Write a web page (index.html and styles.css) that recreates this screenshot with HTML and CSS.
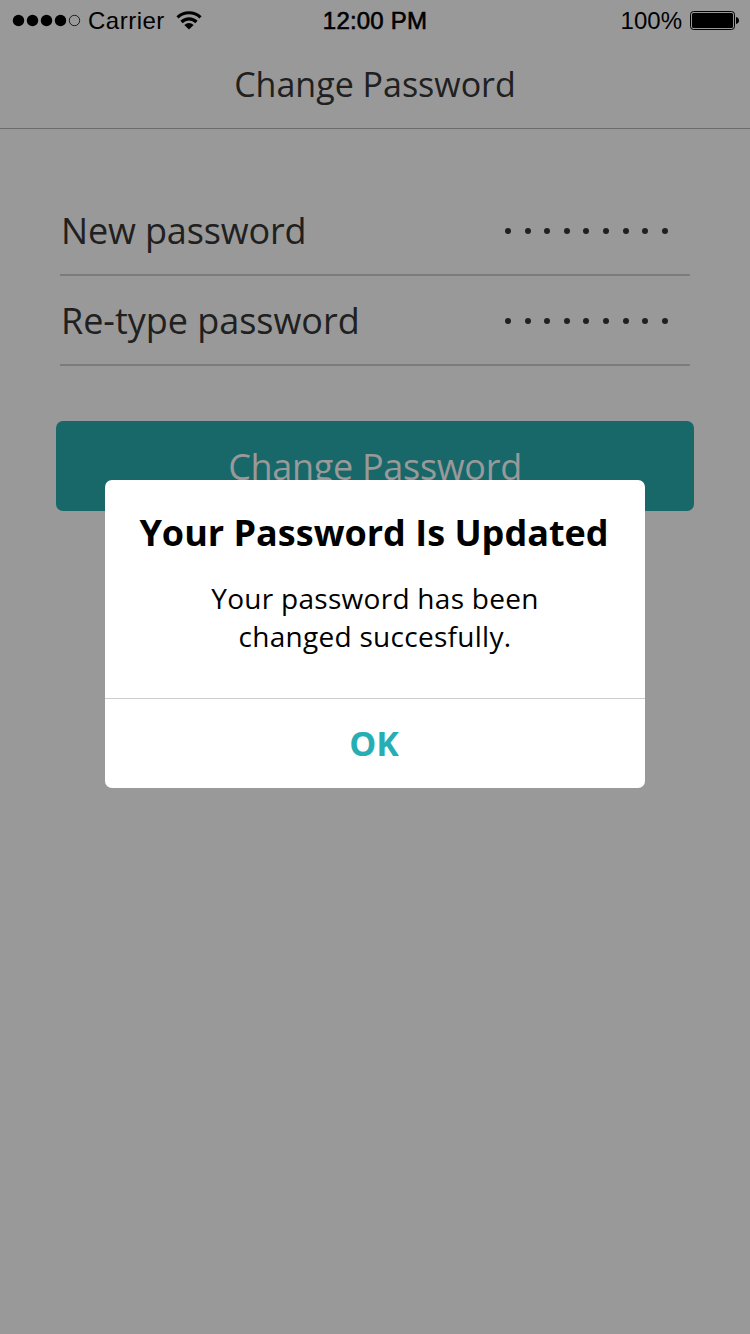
FILE: index.html
```html
<!DOCTYPE html>
<html lang="en">
<head>
<meta charset="utf-8">
<title>Change Password</title>
<link rel="stylesheet" href="styles.css">
</head>
<body>
<div class="screen">
  <header class="status">
    <div class="status-left">
      <svg class="signal" width="70" height="14" viewBox="0 0 70 14"><circle cx="6.500" cy="6.500" r="5.700"/><circle cx="20.500" cy="6.500" r="5.700"/><circle cx="34.500" cy="6.500" r="5.700"/><circle cx="48.500" cy="6.500" r="5.700"/><circle cx="62.500" cy="6.500" r="5.200" fill="none" stroke="#000" stroke-width=".8"/></svg>
      <span class="carrier">Carrier</span>
      <svg class="wifi" width="26" height="20" viewBox="0 0 26 20"><g fill="none" stroke="#000" stroke-width="3.200"><path d="M1.500 6.400C8 .2 18 .2 24.500 6.400"/><path d="M5.500 11C9.800 6.800 16.200 6.800 20.500 11"/></g><path d="M8.300 14Q13 10.200 17.700 14L13 18.500Z"/></svg>
    </div>
    <div class="time">12:00 PM</div>
    <div class="status-right"><span class="percent">100%</span>
      <svg class="battery" width="50" height="20" viewBox="0 0 50 20"><rect x=".5" y=".5" width="44" height="18" rx="3" fill="none" stroke="#000"/><rect x="2" y="2" width="41" height="15" rx="1.500"/><path d="M46 6q3 .8 3 3.500T46 13z"/></svg>
    </div>
  </header>
  <h1 class="title"><span class="title-text">Change Password</span></h1>
  <main class="form">
    <div class="field"><span class="label new">New password</span><span class="dots"><i></i><i></i><i></i><i></i><i></i><i></i><i></i><i></i><i></i></span></div>
    <div class="field"><span class="label retype">Re-type password</span><span class="dots"><i></i><i></i><i></i><i></i><i></i><i></i><i></i><i></i><i></i></span></div>
    <button class="submit">Change Password</button>
  </main>
  <section class="dialog">
    <div class="message">
      <h2 class="heading">Your Password Is Updated</h2>
      <p class="copy">Your password has been<br>changed succesfully.</p>
    </div>
    <button class="ok">OK</button>
  </section>
</div>
</body>
</html>
```
FILE: styles.css
```css
* { box-sizing: border-box; }
body { margin: 0; font-family: "Open Sans", sans-serif; }
.screen { position: relative; width: 750px; height: 1334px; background: #999; overflow: hidden; color: #202020; }
.status { display: grid; grid-template-columns: 1fr auto 1fr; height: 40px; align-items: center; color: #000; font: 24px/40px "Liberation Sans", sans-serif; padding: 1px 10px 0 12px; }
.status-left, .status-right { display: flex; align-items: center; height: 40px; }
.status-right { justify-content: flex-end; gap: 8px; }
.carrier { margin-left: 6px; letter-spacing: .5px; }
.wifi { margin-left: 11px; }
.time { padding-right: 2px; letter-spacing: .2px; -webkit-text-stroke: .6px #000; }
.title { margin: 0; height: 89px; border-bottom: 1px solid #6c6c6c; text-align: center; font-size: 34px; font-weight: 400; line-height: 88px; }
.form { padding: 57px 56px 0; }
.field { display: flex; justify-content: space-between; align-items: center; height: 90px; margin: 0 4px; padding: 2px 22px 0 1px; border-bottom: 2px solid #7c7c7c; }
.label { font-size: 36px; line-height: 86px; letter-spacing: -.15px; }
.retype { letter-spacing: -.03px; }
.dots { display: flex; gap: 13.650px; }
.dots i { width: 6px; height: 6px; border-radius: 50%; background: #202020; }
.submit { display: block; width: 638px; height: 90px; margin-top: 55px; padding: 2px 0 0; border: 0; border-radius: 7px; background: #186869; color: #999; font: 400 36px/88px "Open Sans", sans-serif; letter-spacing: -.3px; }
.dialog { position: absolute; left: 105px; top: 480px; width: 540px; height: 308px; border-radius: 7px; background: #fff; color: #000; text-align: center; }
.message { height: 219px; padding-top: 28px; border-bottom: 1px solid #ccc; }
.heading { margin: 0; padding-right: 2px; font-size: 36px; line-height: 50px; font-weight: 700; }
.copy { margin: 21px 0 0; font-size: 28px; line-height: 38px; letter-spacing: .28px; }
.ok { display: block; width: 100%; height: 89px; padding: 0 2px 0 0; border: 0; background: transparent; color: #27aeb5; font: 700 34px/89px "Open Sans", sans-serif; }
```
